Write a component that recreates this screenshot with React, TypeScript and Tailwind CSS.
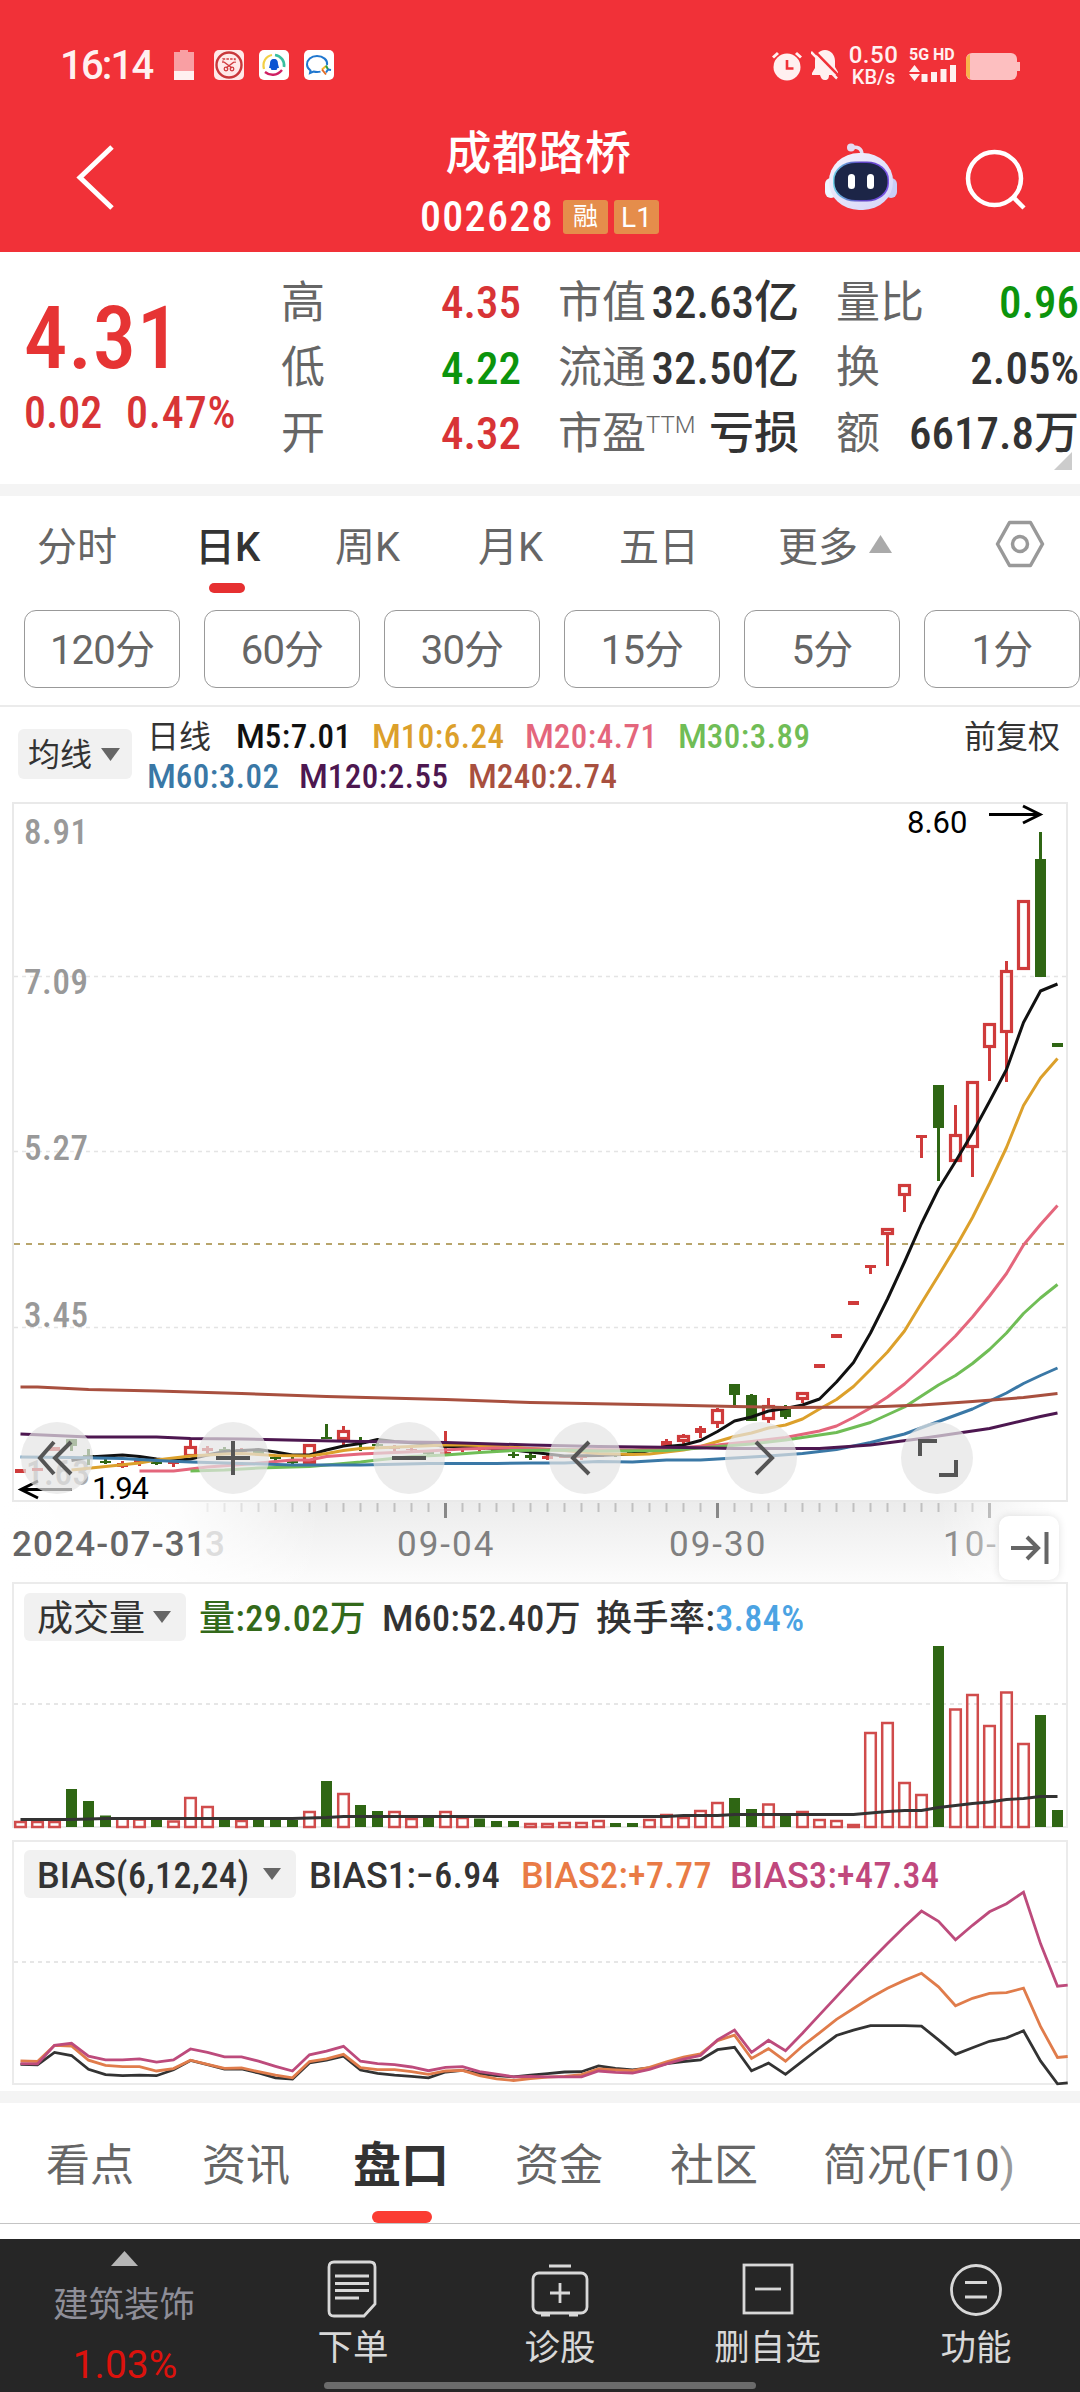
import type { ReactNode } from 'react';

type Kind = 'r' | 'g';

// kind, high, top, bottom, low
type Candle = [Kind, number, number, number, number];

const STEP = 17;
const X0 = 20.5;
const cx = (i: number) => X0 + i * STEP;

const RED = '#cf3b3b';
const GREEN = '#2f6614';

const candles: Candle[] = [
  ['r', 1469, 1469, 1473, 1473],
  ['r', 1468, 1468, 1471, 1471],
  ['r', 1447, 1447, 1451, 1451],
  ['g', 1439, 1439, 1446, 1451],
  ['g', 1449, 1455, 1457, 1465],
  ['g', 1459, 1461, 1463, 1464],
  ['r', 1461, 1463, 1467, 1468],
  ['r', 1459, 1460, 1462, 1466],
  ['g', 1460, 1462, 1464, 1465],
  ['r', 1459, 1462, 1464, 1467],
  ['r', 1440, 1446, 1457, 1457],
  ['r', 1446, 1448, 1451, 1453],
  ['g', 1447, 1449, 1452, 1454],
  ['r', 1448, 1449, 1452, 1454],
  ['g', 1449, 1451, 1454, 1455],
  ['g', 1455, 1457, 1459, 1461],
  ['g', 1457, 1461, 1463, 1464],
  ['r', 1444, 1444, 1464, 1466],
  ['g', 1424, 1437, 1439, 1439],
  ['r', 1426, 1430, 1440, 1445],
  ['g', 1437, 1441, 1444, 1451],
  ['g', 1443, 1444, 1446, 1447],
  ['r', 1445, 1446, 1449, 1451],
  ['r', 1447, 1449, 1450, 1452],
  ['g', 1450, 1452, 1454, 1455],
  ['r', 1431, 1452, 1454, 1454],
  ['r', 1446, 1447, 1450, 1452],
  ['r', 1446, 1448, 1450, 1452],
  ['g', 1447, 1449, 1451, 1453],
  ['g', 1452, 1454, 1456, 1458],
  ['g', 1453, 1455, 1458, 1460],
  ['r', 1454, 1456, 1459, 1460],
  ['r', 1456, 1456, 1458, 1458],
  ['r', 1455, 1456, 1458, 1460],
  ['r', 1455, 1455, 1457, 1457],
  ['g', 1453, 1454, 1456, 1457],
  ['g', 1451, 1452, 1454, 1455],
  ['r', 1446, 1448, 1450, 1452],
  ['r', 1439, 1441, 1447, 1447],
  ['r', 1434, 1435, 1442, 1446],
  ['r', 1426, 1428, 1433, 1438],
  ['r', 1408, 1409, 1424, 1428],
  ['g', 1384, 1384, 1395, 1407],
  ['g', 1394, 1395, 1421, 1421],
  ['r', 1398, 1405, 1420, 1423],
  ['g', 1405, 1408, 1417, 1419],
  ['r', 1392, 1392, 1400, 1403],
  ['r', 1364, 1364, 1368, 1368],
  ['r', 1334, 1334, 1338, 1338],
  ['r', 1301, 1301, 1305, 1305],
  ['r', 1265, 1265, 1268, 1274],
  ['r', 1228, 1228, 1235, 1266],
  ['r', 1184, 1184, 1196, 1212],
  ['r', 1135, 1135, 1138, 1158],
  ['g', 1085, 1085, 1128, 1181],
  ['r', 1105, 1134, 1162, 1162],
  ['r', 1081, 1081, 1148, 1177],
  ['r', 1023, 1023, 1048, 1081],
  ['r', 961, 970, 1033, 1082],
  ['r', 900, 900, 970, 970],
  ['g', 832, 859, 977, 977],
  ['g', 1043, 1043, 1047, 1047],
];

// [candle index, y]
type Series = [number, number][];

const averages: { color: string; pts: Series }[] = [
  {
    color: '#111111',
    pts: [
      [3, 1460.5], [4, 1457], [6, 1455], [7, 1456.5], [8, 1459], [9, 1460.5], [10, 1459], [11, 1455], [12, 1451.5],
      [13, 1450.5], [14, 1449.5], [15, 1452], [16, 1455], [17, 1455], [18, 1450], [19, 1446], [20, 1443.5],
      [21, 1439.5], [22, 1441.5], [24, 1444], [25, 1446.5], [27, 1447.5], [29, 1450], [30, 1452], [31, 1454],
      [32, 1456], [34, 1455.5], [36, 1454], [37, 1450.5], [38, 1446.5], [39, 1445], [40, 1440.5], [41, 1431.5],
      [42, 1421], [43, 1417], [44, 1411], [45, 1408.5], [46, 1405], [47, 1399], [48, 1382], [49, 1362.5], [50, 1333],
      [51, 1299], [52, 1262], [53, 1223.5], [54, 1189], [55, 1161.5], [56, 1133], [57, 1101.5], [58, 1069.5],
      [59, 1022.5], [60, 991], [61, 984],
    ],
  },
  {
    color: '#dca02b',
    pts: [
      [3, 1470], [5, 1466.5], [7, 1463], [8, 1460], [10, 1456], [12, 1454], [13, 1453.5], [14, 1454.5], [15, 1455.5],
      [17, 1456], [18, 1453.5], [19, 1450.5], [20, 1448.5], [23, 1446.5], [25, 1445], [26, 1445], [28, 1446],
      [30, 1448.5], [32, 1450.5], [34, 1453.5], [36, 1454.5], [37, 1454], [38, 1452], [39, 1450], [40, 1446.5],
      [41, 1441.5], [42, 1436.5], [43, 1433], [44, 1428], [45, 1425], [46, 1419], [47, 1409], [48, 1399.5],
      [49, 1386.5], [50, 1369.5], [51, 1352], [52, 1331], [53, 1303], [54, 1275.5], [55, 1247.5], [56, 1217.5],
      [57, 1183.5], [58, 1147.5], [59, 1105.5], [60, 1078], [61, 1058.5],
    ],
  },
  {
    color: '#e4667c',
    pts: [
      [7, 1471], [9, 1471], [10, 1469], [11, 1467], [13, 1464.5], [16, 1460], [17, 1460], [18, 1456.5], [20, 1454],
      [24, 1451], [26, 1449], [28, 1448], [32, 1449.5], [36, 1450], [39, 1447.5], [41, 1445], [43, 1441.5],
      [45, 1437.5], [47, 1431], [48, 1426], [49, 1417.5], [50, 1408], [51, 1397], [52, 1384], [53, 1368.5],
      [54, 1352.5], [55, 1336], [56, 1317], [57, 1296], [58, 1273.5], [59, 1245], [60, 1224.5], [61, 1205.5],
    ],
  },
  {
    color: '#70bd56',
    pts: [
      [10, 1471], [12, 1470], [14, 1468], [17, 1466.5], [18, 1465], [20, 1462], [21, 1460], [23, 1456.5], [25, 1455],
      [27, 1452.5], [29, 1450.5], [32, 1450], [34, 1451], [38, 1450.5], [40, 1448], [43, 1444], [45, 1440],
      [48, 1432.5], [50, 1422.5], [52, 1407], [54, 1385], [55, 1375.5], [56, 1363.5], [57, 1349.5], [58, 1333],
      [59, 1313.5], [60, 1298], [61, 1284.5],
    ],
  },
  {
    color: '#3a78a6',
    pts: [
      [0, 1457], [3, 1457.5], [6, 1458.5], [8, 1460.5], [10, 1462], [13, 1463.5], [16, 1465], [20, 1465],
      [24, 1463.5], [28, 1463.5], [30, 1463], [32, 1463], [34, 1461.5], [36, 1462], [38, 1460], [40, 1460],
      [42, 1458], [44, 1456], [46, 1453.5], [48, 1449.5], [50, 1442.5], [52, 1434], [54, 1421.5], [56, 1409],
      [58, 1393], [59, 1383.5], [60, 1375.5], [61, 1368],
    ],
  },
  {
    color: '#4d1750',
    pts: [
      [0, 1434], [4, 1437], [8, 1437], [10, 1438.5], [13, 1439], [17, 1440.5], [20, 1441.5], [25, 1442.5],
      [30, 1445], [34, 1446.5], [39, 1447.5], [42, 1448.5], [47, 1448.5], [50, 1445], [53, 1438.5], [57, 1428.5],
      [60, 1416.5], [61, 1413],
    ],
  },
  {
    color: '#a8503f',
    pts: [
      [0, 1387], [1, 1387], [4, 1389.5], [8, 1391], [13, 1393.5], [18, 1396.5], [25, 1399.5], [30, 1402.5],
      [38, 1405], [42, 1406.5], [45, 1407.5], [50, 1407], [53, 1405], [56, 1401.5], [59, 1397.5], [61, 1393.5],
    ],
  },
];

const volumes: [Kind, number][] = [
  ['r', 6], ['r', 6], ['r', 6], ['g', 38], ['g', 26], ['g', 11.5], ['r', 9.5], ['r', 8.5], ['g', 7], ['r', 6.5],
  ['r', 30], ['r', 21], ['g', 7.5], ['r', 7], ['g', 7], ['g', 7.5], ['g', 7], ['r', 16], ['g', 46], ['r', 34],
  ['g', 22], ['g', 16], ['r', 16], ['r', 9], ['g', 10], ['r', 16], ['r', 10], ['g', 8.5], ['g', 6], ['g', 6],
  ['r', 4], ['r', 4], ['r', 5], ['r', 5], ['r', 7], ['g', 4], ['g', 4], ['r', 8], ['r', 13], ['r', 10],
  ['r', 17], ['r', 25], ['g', 29], ['g', 18], ['r', 23.5], ['g', 11], ['r', 16], ['r', 8], ['r', 7], ['r', 3],
  ['r', 95], ['r', 105], ['r', 45], ['r', 33], ['g', 181], ['r', 118.5], ['r', 133], ['r', 102], ['r', 135.5],
  ['r', 84], ['g', 112], ['g', 17],
];

const volumeAverage: Series = [
  [0, 7.5], [3, 7.5], [5, 8.5], [16, 8.5], [18, 9.5], [19, 10.5], [38, 10.5], [39, 11.5], [41, 11.5], [42, 12.5],
  [49, 12.5], [51, 15.5], [52, 16.5], [53, 16.5], [54, 19.5], [55, 21.5], [56, 23.5], [57, 25], [58, 27.5],
  [59, 28.5], [60, 30.5], [61, 30.5],
];

const bias: { color: string; ys: number[] }[] = [
  {
    color: '#333333',
    ys: [
      1462, 1464, 1427, 1436, 1477, 1493, 1496, 1494, 1496, 1478, 1451, 1463, 1476, 1476, 1488, 1502, 1506, 1458,
      1450, 1438, 1479, 1489, 1494, 1498, 1502, 1485, 1480, 1490, 1496, 1499, 1494, 1490, 1485, 1484, 1467, 1474,
      1479, 1473, 1460, 1454, 1449, 1419, 1412, 1481, 1459, 1492, 1453, 1414, 1377, 1361, 1348, 1348, 1348, 1349,
      1390, 1433, 1413, 1394, 1384, 1363, 1452, 1520,
    ],
  },
  {
    color: '#e07c4b',
    ys: [
      1452, 1454, 1406, 1408, 1450, 1465, 1469, 1469, 1482, 1475, 1450, 1462, 1474, 1473, 1484, 1494, 1502, 1454,
      1446, 1433, 1472, 1478, 1478, 1484, 1492, 1482, 1480, 1496, 1505, 1510, 1504, 1500, 1498, 1493, 1476, 1479,
      1481, 1471, 1455, 1441, 1431, 1392, 1376, 1445, 1416, 1453, 1408, 1369, 1329, 1297, 1265, 1237, 1214, 1193,
      1233, 1289, 1267, 1252, 1250, 1237, 1350, 1442,
    ],
  },
  {
    color: '#bd4b7c',
    ys: [
      1460, 1461, 1406, 1400, 1438, 1449, 1449, 1446, 1456, 1449, 1417, 1427, 1440, 1440, 1453, 1468, 1482, 1434,
      1423, 1409, 1453, 1460, 1463, 1470, 1481, 1471, 1469, 1484, 1491, 1499, 1498, 1499, 1499, 1499, 1482, 1486,
      1488, 1477, 1461, 1447, 1436, 1390, 1361, 1427, 1391, 1422, 1370, 1316, 1262, 1208, 1156, 1105, 1055, 1009,
      1039, 1094, 1051, 1011, 987, 953, 1105, 1231,
    ],
  },
];

const line = (pts: Series, y: (v: number) => number = (v) => v) =>
  pts.map(([i, v]) => `${cx(i)},${y(v).toFixed(1)}`).join(' ');

// letters keep their full width, figures are set condensed
function Num({ children }: { children: string }) {
  return (
    <>
      {children
        .split(/([A-Z]+)/)
        .filter(Boolean)
        .map((part, i) =>
          /[A-Z]/.test(part) ? (
            part
          ) : (
            <span key={i} className="tracking-[0.5px] [font-stretch:75%]">
              {part}
            </span>
          ),
        )}
    </>
  );
}

function CandleMark({ i, candle }: { i: number; candle: Candle }) {
  const [kind, high, top, bottom, low] = candle;
  const color = kind === 'r' ? RED : GREEN;
  const x = cx(i);
  const hollow = kind === 'r' && bottom - top > 6;
  return (
    <g stroke={color} fill={color}>
      {high < top && <line x1={x} x2={x} y1={high} y2={top} strokeWidth="3" />}
      {low > bottom && <line x1={x} x2={x} y1={bottom} y2={low} strokeWidth="3" />}
      {hollow ? (
        <rect x={x - 5} y={top + 1.5} width="10" height={bottom - top - 3} fill="none" strokeWidth="3.2" />
      ) : (
        <rect x={x - 5.5} y={top} width="11" height={bottom - top} stroke="none" />
      )}
    </g>
  );
}

function Caret({ up = false, className = '' }: { up?: boolean; className?: string }) {
  return (
    <svg viewBox="0 0 20 13" preserveAspectRatio="none" className={className}>
      <path d={up ? 'M10 0 20 13H0Z' : 'M0 0H20L10 13Z'} fill="currentColor" />
    </svg>
  );
}

function StatusBar() {
  return (
    <div className="flex h-[104px] items-start pt-[47px] text-[#fff0f0]">
      <div className="mt-[1px] ml-[60px] w-[114px] text-[40px] leading-[36px] font-medium tracking-[-1.8px]">16:14</div>
      <svg viewBox="0 0 20 30" className="mt-[3px] h-[30px] w-5">
        <path d="M6 0h8v2h6v28H0V2h6z" fill="#f99fa3" />
        <path d="M0 21h20v9H0z" fill="#fff0f0" />
      </svg>
      <svg viewBox="0 0 30 30" className="mt-[3px] ml-5 h-[30px] w-[30px]">
        <rect width="30" height="30" rx="5" fill="#ffe9e9" />
        <circle cx="15" cy="15" r="12.5" fill="none" stroke="#c9383c" strokeWidth="2.4" />
        <path d="M9 13V9h12v4" fill="none" stroke="#d13b40" strokeWidth="1.4" strokeDasharray="2.5 1.2" />
        <path d="M10 12l8 6M20 12l-8 6" stroke="#d13b40" strokeWidth="1.5" />
        <circle cx="12" cy="19" r="1.8" fill="none" stroke="#d13b40" strokeWidth="1.3" />
        <circle cx="18" cy="19" r="1.8" fill="none" stroke="#d13b40" strokeWidth="1.3" />
      </svg>
      <svg viewBox="0 0 30 30" className="mt-[3px] ml-[15px] h-[30px] w-[30px]">
        <rect width="30" height="30" rx="5" fill="#fff" />
        <path d="M5 19C3 12 7 6 13 5" fill="none" stroke="#f3cf45" strokeWidth="2.2" />
        <path d="M16 5c6 1 10 6 9 12" fill="none" stroke="#39bfa0" strokeWidth="2.6" />
        <path d="M6 22c5 4 12 4 17-2" fill="none" stroke="#cf1f63" strokeWidth="2.4" />
        <path d="M15 9c-3 0-4 2-4 5l-1 4h1.5l1 2h5l1-2H20l-1-4c0-3-1-5-4-5z" fill="#0b55d2" />
      </svg>
      <svg viewBox="0 0 30 30" className="mt-[3px] ml-[15px] h-[30px] w-[30px]">
        <rect width="30" height="30" rx="5" fill="#fff" />
        <path
          d="M23 15c1-5-4-9-10-9S3 10 3 14.5c0 2.5 1.5 4.500 3.500 6L6 23l3.500-1.500c2 .6 5 .6 7 .1"
          fill="none"
          stroke="#2077cf"
          strokeWidth="2"
        />
        <path d="M18 19.500l4-3.500" stroke="#f6b92d" strokeWidth="2" />
        <path d="M22 15.500l2 4" stroke="#2aa04a" strokeWidth="2" />
        <path d="M24 19.500l3 .5M24 19.500l-2 3" stroke="#2077cf" strokeWidth="2" />
        <path d="M18 19.500l4 5" stroke="#e36a22" strokeWidth="2" />
      </svg>

      <div className="ml-auto flex pr-[60px]">
        <svg viewBox="0 0 30 30" className="mt-[4px] h-[30px] w-[30px]">
          <circle cx="15" cy="16" r="13.5" fill="currentColor" />
          <path d="M1 6.500 6 2M29 6.500 24 2" stroke="currentColor" strokeWidth="3" />
          <path d="M15 9v8.500h6.500" fill="none" stroke="#f13138" strokeWidth="2.6" />
        </svg>
        <svg viewBox="0 0 28 31" className="mt-[3px] ml-[9px] h-[31px] w-7">
          <path d="M14 0c6 0 10 5 10 11v6l3 5v3H18c0 3-1 5-4 5s-4-2-5-5H1v-2l3-5v-7C4 5 8 0 14 0z" fill="currentColor" />
          <path d="M2.500 0 28 26" stroke="#f13138" strokeWidth="2.5" />
          <path d="M0 2 26 28.500" stroke="currentColor" strokeWidth="2.5" />
        </svg>
        <div className="ml-[9px] w-[51px] text-center font-medium">
          <div className="-mt-[4px] text-[24px] leading-[24px] tracking-[0.5px]">0.50</div>
          <div className="text-[20px] leading-[20px]">KB/s</div>
        </div>
        <div className="ml-2.5 w-[48px]">
          <div className="text-[16px] leading-[16px] font-bold whitespace-nowrap">5G HD</div>
          <svg viewBox="0 0 48 18" className="mt-[1px] h-[18px] w-12">
            <path d="M5.500 1 11 8H0zM5.500 17 0 10h11z" fill="currentColor" />
            <path d="M15.500 10v8M25 8v10M34.500 5v13M44 1v17" stroke="currentColor" strokeWidth="6" />
          </svg>
        </div>
        <svg viewBox="0 0 54 28" className="mt-[6px] ml-[9px] h-7 w-[54px]">
          <rect width="51" height="27" rx="6" fill="#fdbfc0" />
          <path d="M51 9h3v9h-3z" fill="#fdbfc0" />
          <path d="M4 1Q0 3 0 7v13q0 4 4 6z" fill="#f7b34b" />
        </svg>
      </div>
    </div>
  );
}

function Robot() {
  return (
    <svg viewBox="0 0 72 68" className="h-[68px] w-[72px]">
      <defs>
        <linearGradient id="shell" x1="0" y1="0" x2="1" y2="1">
          <stop offset="0" stopColor="#f7f4fd" />
          <stop offset="1" stopColor="#d3d3f8" />
        </linearGradient>
        <linearGradient id="rim" x1="0" y1="0.5" x2="1" y2="0.5">
          <stop offset="0" stopColor="#6fd3e8" />
          <stop offset="0.5" stopColor="#5a3fc0" />
          <stop offset="1" stopColor="#7a55e6" />
        </linearGradient>
      </defs>
      <rect x="0" y="35" width="12" height="20" rx="6" fill="#eef6ff" />
      <rect x="60" y="35" width="12" height="20" rx="6" fill="#c9cdf6" />
      <path d="M26 5c6-2 11 0 11 7" fill="none" stroke="#e7dff2" strokeWidth="3.5" />
      <circle cx="26" cy="4.5" r="4" fill="#e3dcf2" />
      <rect x="4" y="10" width="64" height="57" rx="30" ry="28" fill="url(#shell)" />
      <rect x="8" y="18.5" width="56" height="40" rx="22" ry="18" fill="url(#rim)" />
      <rect x="9.5" y="20" width="53" height="37" rx="21" ry="17" fill="#1c2547" />
      <rect x="23" y="31" width="7" height="15" rx="3.5" fill="#fff" />
      <rect x="42" y="31" width="7" height="15" rx="3.5" fill="#fff" />
    </svg>
  );
}

function TitleBar() {
  return (
    <div className="flex h-[148px] text-white">
      <div className="w-[252px] pt-10 pl-[74px]">
        <svg viewBox="0 0 42 68" className="h-[68px] w-[42px]">
          <path d="M38 3 6 33.500 38 64" fill="none" stroke="currentColor" strokeWidth="5" />
        </svg>
      </div>
      <div className="flex flex-1 flex-col items-center pt-[21px]">
        <div className="text-[46px] leading-[56px] font-medium tracking-[0.5px]">成都路桥</div>
        <div className="mt-[18px] ml-[2px] flex h-[36px] items-center">
          <div className="w-[143px] text-[42px] leading-9 font-medium tracking-[1.3px] [font-stretch:75%]">002628</div>
          <div className="h-[34px] w-[45px] rounded-[3px] bg-[#e58d4b] text-center text-[25px] leading-[34px]">融</div>
          <div className="ml-1.5 h-[34px] w-[45px] rounded-[3px] bg-[#e58d4b] text-center text-[28px] leading-[36px]">L1</div>
        </div>
      </div>
      <div className="flex w-[255px] pt-[39px]">
        <Robot />
        <svg viewBox="0 0 62 64" className="mt-[6px] ml-[68px] h-16 w-[62px]">
          <circle cx="29.5" cy="29.5" r="26.5" fill="none" stroke="currentColor" strokeWidth="4.5" />
          <path d="M48 48 59 59" stroke="currentColor" strokeWidth="4.5" />
        </svg>
      </div>
    </div>
  );
}

const stats: { label: ReactNode; value: string; tone: string }[][] = [
  [
    { label: '高', value: '4.35', tone: 'text-[#d83436]' },
    { label: '低', value: '4.22', tone: 'text-[#0c940c]' },
    { label: '开', value: '4.32', tone: 'text-[#d83436]' },
  ],
  [
    { label: '市值', value: '32.63亿', tone: 'text-[#333]' },
    { label: '流通', value: '32.50亿', tone: 'text-[#333]' },
    {
      label: (
        <>
          市盈<sup className="relative -top-[16px] align-baseline text-[24px] leading-none font-light">TTM</sup>
        </>
      ),
      value: '亏损',
      tone: 'text-[#333]',
    },
  ],
  [
    { label: '量比', value: '0.96', tone: 'text-[#0c940c]' },
    { label: '换', value: '2.05%', tone: 'text-[#333]' },
    { label: '额', value: '6617.8万', tone: 'text-[#333]' },
  ],
];

const statWidths = ['w-[240px]', 'w-[241px]', 'w-[243px]'];

function Quote() {
  return (
    <div className="relative flex h-[232px] bg-white">
      <div className="w-[281px] shrink-0 pl-6 text-[#e63434]">
        <div className="mt-[38px] text-[87px] leading-[96px] font-medium tracking-[0.5px] [font-stretch:75%]">4.31</div>
        <div className="mt-[4px] flex text-[44px] leading-[46px] font-medium text-[#d83436] [font-stretch:75%]">
          <span className="w-[102px]">0.02</span>
          <span className="tracking-[0.8px]">0.47%</span>
        </div>
      </div>
      {stats.map((col, c) => (
        <div key={c} className={`mr-[37px] shrink-0 pt-[18px] ${statWidths[c]}`}>
          {col.map((row) => (
            <div key={row.value} className="flex h-[65.5px] items-center justify-between whitespace-nowrap">
              <span className="text-[44px] text-[#666]">{row.label}</span>
              <span className={`text-[45px] font-medium [font-stretch:75%] ${row.tone}`}>{row.value}</span>
            </div>
          ))}
        </div>
      ))}
      <svg viewBox="0 0 18 18" className="absolute right-2 bottom-[14px] h-[18px] w-[18px]">
        <path d="M18 0v18H0z" fill="#ccc" />
      </svg>
    </div>
  );
}

function PeriodTabs() {
  const tab = 'text-[40px] leading-[50px]';
  return (
    <div className="flex h-[114px] pt-[27px] pl-[37px] whitespace-nowrap text-[#666]">
      <div className={`w-[158px] ${tab}`}>分时</div>
      <div className={`flex w-[140px] flex-col text-[#333] ${tab}`}>
        <span className="font-medium">日K</span>
        <span className="mt-[10px] ml-[14px] h-[10px] w-9 rounded-full bg-[#e63031]" />
      </div>
      <div className={`w-[143px] ${tab}`}>周K</div>
      <div className={`w-[141px] ${tab}`}>月K</div>
      <div className={`w-[159px] ${tab}`}>五日</div>
      <div className={`flex ${tab}`}>
        更多
        <Caret up className="mt-[12px] ml-[11px] h-[18px] w-[23px] text-[#aaa]" />
      </div>
      <svg viewBox="0 0 50 48" className="-mt-[3px] ml-[103px] h-12 w-[50px]">
        <path d="M14.500 2.500h21L47.500 24 35.500 45.500h-21L2.500 24z" fill="none" stroke="#999" strokeWidth="3.5" strokeLinejoin="round" />
        <circle cx="25" cy="24" r="7.5" fill="none" stroke="#999" strokeWidth="3.5" />
      </svg>
    </div>
  );
}

function MinuteButtons() {
  return (
    <div className="flex h-[97px] gap-6 border-b-2 border-[#ebebeb] pl-6">
      {['120', '60', '30', '15', '5', '1'].map((m) => (
        <div
          key={m}
          className="h-[78px] w-[156px] shrink-0 rounded-[12px] border border-[#999] text-center text-[40px] leading-[79px] tracking-[-0.8px] text-[#666]"
        >
          {m}分
        </div>
      ))}
    </div>
  );
}

function AverageLegend() {
  return (
    <div className="flex h-[95px] text-[33px] leading-[40px] font-medium whitespace-nowrap text-[#333]">
      <div className="mt-[22px] ml-[18px] flex h-[50px] w-[114px] items-center rounded-[6px] bg-[#f1f1f1] pl-[10px] text-[32px] font-normal">
        <span className="pt-0.5">均线</span>
        <Caret className="ml-[9px] h-[13px] w-[19px] text-[#666]" />
      </div>
      <div className="ml-[15px] pt-[10px]">
        <div className="flex">
          <span className="w-[89px] text-[32px] font-normal">日线</span>
          <span className="w-[136px] text-[#111]"><Num>M5:7.01</Num></span>
          <span className="w-[153px] text-[#dca02b]"><Num>M10:6.24</Num></span>
          <span className="w-[153px] text-[#e4667c]"><Num>M20:4.71</Num></span>
          <span className="w-[200px] text-[#70bd56]"><Num>M30:3.89</Num></span>
        </div>
        <div className="flex">
          <span className="w-[152px] text-[#3a78a6]"><Num>M60:3.02</Num></span>
          <span className="w-[169px] text-[#4d1750]"><Num>M120:2.55</Num></span>
          <span className="text-[#a8503f]"><Num>M240:2.74</Num></span>
        </div>
      </div>
      <div className="mr-[20px] ml-auto pt-[10px] text-[32px] font-normal">前复权</div>
    </div>
  );
}

const controls = [
  'M33 20 19 36l14 16M50 20 34 36l16 16',
  'M36 19v34M19 36h34',
  'M19 36h34',
  'M40 20 24 36l16 16',
  'M31 20l16 16-16 16',
  'M19 34V19h17M55 38v15H38',
];

function PriceChart() {
  return (
    <div className="relative h-[700px]">
      <svg viewBox="0 802 1080 700" className="h-[700px] w-[1080px] overflow-visible">
        <rect x="13" y="803" width="1054" height="698" fill="none" stroke="#e9e9e9" strokeWidth="2" />
        {[976.5, 1151.5, 1327.5].map((y) => (
          <line key={y} x1="14" x2="1066" y1={y} y2={y} stroke="#e4e4e4" strokeWidth="1.5" strokeDasharray="4 4" />
        ))}
        <line x1="14" x2="1066" y1="1244" y2="1244" stroke="#b8a56c" strokeWidth="2" strokeDasharray="6 6" />
        <g className="text-[35px] font-medium tracking-[0.6px] [font-stretch:75%]" fill="#999">
          <text x="24" y="844">8.91</text>
          <text x="24" y="994">7.09</text>
          <text x="24" y="1160">5.27</text>
          <text x="24" y="1327">3.45</text>
          <text x="26" y="1485" fill="#aaa">1.63</text>
        </g>
        {candles.map((c, i) => (
          <CandleMark key={i} i={i} candle={c} />
        ))}
        {averages.map((a) => (
          <polyline key={a.color} points={line(a.pts)} fill="none" stroke={a.color} strokeWidth="3" strokeLinejoin="round" />
        ))}
        <g className="text-[31px]" fill="#000">
          <text x="907" y="833">8.60</text>
          <text x="92" y="1499" textLength="57">1.94</text>
        </g>
        <g fill="none" stroke="#000" strokeWidth="3">
          <path d="M989 814.500h50M1023 806l17 8.500-17 8.500" />
          <path d="M72 1489.500H21M38 1481l-17 8.500 17 8.500" />
        </g>
      </svg>
      <div className="absolute top-[620px] left-[21px] flex gap-[104px]">
        {controls.map((d) => (
          <svg key={d} viewBox="0 0 72 72" className="h-[72px] w-[72px]">
            <circle cx="36" cy="36" r="36" fill="#e4e4e4" opacity="0.7" />
            <path d={d} fill="none" stroke="#555" strokeWidth="4" />
          </svg>
        ))}
      </div>
    </div>
  );
}

function DateAxis() {
  return (
    <div className="relative h-[80px] bg-gradient-to-b from-[#ececec] to-[#fcfcfc]">
      <svg viewBox="0 1502 1080 80" className="h-20 w-[1080px]">
        <defs>
          <linearGradient id="fadeLeft">
            <stop offset="0" stopColor="#fff" />
            <stop offset="0.55" stopColor="#fff" stopOpacity="0.9" />
            <stop offset="1" stopColor="#fff" stopOpacity="0" />
          </linearGradient>
          <linearGradient id="fadeRight">
            <stop offset="0" stopColor="#fff" stopOpacity="0" />
            <stop offset="0.8" stopColor="#fff" />
            <stop offset="1" stopColor="#fff" />
          </linearGradient>
        </defs>
        {Array.from({ length: 47 }, (_, k) => k + 11).map((i) => {
          const major = i === 25 || i === 41 || i === 57;
          return (
            <line
              key={i}
              x1={cx(i)}
              x2={cx(i)}
              y1="1503"
              y2={major ? 1518 : 1512}
              stroke={major ? '#888' : '#c0c0c0'}
              strokeWidth={major ? 3 : 2}
            />
          );
        })}
        <g className="text-[35px] tracking-[2px]" fill="#808080">
          <text x="397" y="1556">09-04</text>
          <text x="669" y="1556">09-30</text>
          <text x="943" y="1556">10-18</text>
        </g>
        <rect x="0" y="1502" width="320" height="80" fill="url(#fadeLeft)" />
        <rect x="940" y="1502" width="140" height="80" fill="url(#fadeRight)" />
        <g className="text-[35px] font-medium tracking-[1.2px]">
          <text x="12" y="1556" fill="#666">2024-07-31</text>
          <text x="205" y="1556" fill="#ddd">3</text>
        </g>
      </svg>
      <div className="absolute top-[14px] left-[999px] h-16 w-[60px] rounded-[10px] bg-white shadow-[0_0_8px_rgba(0,0,0,0.12)]">
        <svg viewBox="0 0 60 64" className="h-16 w-[60px]">
          <path d="M12 32h27M28 21l11 11-11 11M47.500 16v32" fill="none" stroke="#666" strokeWidth="4" />
        </svg>
      </div>
    </div>
  );
}

function VolumeChart() {
  const base = 1827;
  return (
    <div className="relative h-[258px]">
      <svg viewBox="0 1582 1080 258" className="absolute h-[258px] w-[1080px]">
        <path d="M13 1827V1583H1067V1827Z" fill="none" stroke="#ebebeb" strokeWidth="2" />
        <line x1="14" x2="1066" y1="1704" y2="1704" stroke="#e6e6e6" strokeWidth="2" strokeDasharray="4 4" />
        {volumes.map(([kind, h], i) =>
          kind === 'g' ? (
            <rect key={i} x={cx(i) - 5.5} y={base - h} width="11" height={h} fill={GREEN} />
          ) : (
            <rect
              key={i}
              x={cx(i) - 5.3}
              y={base - h + 1}
              width="10.6"
              height={Math.max(h - 1, 2)}
              fill="none"
              stroke="#d04c4c"
              strokeWidth="2.5"
            />
          ),
        )}
        <polyline points={line(volumeAverage, (v) => base - v)} fill="none" stroke="#333" strokeWidth="2.8" />
      </svg>
      <div className="relative flex items-center pt-[11px] pl-6 text-[36px] leading-[48px] font-medium whitespace-nowrap text-[#333]">
        <div className="flex h-12 w-[162px] items-center rounded-[6px] bg-[#f1f1f1] pl-[13px] font-normal">
          <span className="pt-1">成交量</span>
          <Caret className="ml-2 h-[12px] w-[18px] text-[#666]" />
        </div>
        <span className="-mb-1 ml-[13px] w-[183px] text-[#33691a]"><Num>量:29.02万</Num></span>
        <span className="-mb-1 w-[214px]"><Num>M60:52.40万</Num></span>
        <span className="-mb-1"><Num>换手率:</Num></span>
        <span className="-mb-1 text-[#4ba3e3]"><Num>3.84%</Num></span>
      </div>
    </div>
  );
}

function BiasChart() {
  return (
    <div className="relative h-[251px]">
      <svg viewBox="0 1840 1080 251" className="absolute h-[251px] w-[1080px]">
        <rect x="13" y="1841" width="1054" height="243" fill="none" stroke="#ebebeb" strokeWidth="2" />
        <line x1="14" x2="1066" y1="1962" y2="1962" stroke="#e6e6e6" strokeWidth="2" strokeDasharray="4 4" />
        {bias.map((b) => {
          const pts = b.ys.map((v, i): [number, number] => [i, 1570 + v / 2.958]);
          pts.push([61.6, pts[61][1] - 1]);
          return <polyline key={b.color} points={line(pts)} fill="none" stroke={b.color} strokeWidth="2.8" />;
        })}
      </svg>
      <div className="relative flex items-center pt-[10px] pl-6 text-[36px] leading-[48px] font-medium whitespace-nowrap text-[#333]">
        <div className="flex h-12 w-[272px] items-center rounded-[6px] bg-[#f1f1f1] pl-[13px]">
          <span className="w-[226px] pt-1"><Num>BIAS(6,12,24)</Num></span>
          <Caret className="h-[12px] w-[18px] text-[#666]" />
        </div>
        <span className="-mb-1 ml-[13px] w-[212px]"><Num>BIAS1:−6.94</Num></span>
        <span className="-mb-1 w-[209px] text-[#e97b46]"><Num>BIAS2:+7.77</Num></span>
        <span className="-mb-1 text-[#c0487d]"><Num>BIAS3:+47.34</Num></span>
      </div>
    </div>
  );
}

function InfoTabs() {
  return (
    <div className="h-[136px] bg-white">
      <div className="flex h-[121px] border-b border-[#c4c4c4] pt-[36px] pl-[46px] text-[44px] leading-[54px] whitespace-nowrap text-[#666]">
        <span className="w-[156px]">看点</span>
        <span className="w-[151px]">资讯</span>
        <div className="flex w-[162px] flex-col text-[#333]">
          <span className="text-[48px] font-bold">盘口</span>
          <span className="mt-[18px] ml-[19px] h-3 w-[60px] rounded-full bg-[#fb3c32]" />
        </div>
        <span className="w-[155px]">资金</span>
        <span className="w-[153px]">社区</span>
        <span>
          简况(F10<span className="text-[#999]">)</span>
        </span>
      </div>
    </div>
  );
}

const actions: { label: string; width: string; icon: ReactNode }[] = [
  {
    label: '下单',
    width: 'w-[208px]',
    icon: (
      <>
        <path d="M10 3h36q5 0 5 5v37L40 57H10q-5 0-5-5V8q0-5 5-5z" />
        <path d="M11 17h34M11 24.500h34M11 31.500h34M11 39h24" />
      </>
    ),
  },
  {
    label: '诊股',
    width: 'w-[206px]',
    icon: (
      <>
        <rect x="2" y="14" width="54" height="40" rx="6" />
        <path d="M18 7h22M29 24v20M19 34h20M10 56h9M38 56h9" />
      </>
    ),
  },
  {
    label: '删自选',
    width: 'w-[209px]',
    icon: (
      <>
        <rect x="5" y="6" width="48" height="48" />
        <path d="M16 30h26" />
      </>
    ),
  },
  {
    label: '功能',
    width: 'w-[208px]',
    icon: (
      <>
        <circle cx="29" cy="31" r="24.5" />
        <path d="M18 23.500h22M18 38h22" />
      </>
    ),
  },
];

function BottomBar() {
  return (
    <div className="relative flex h-[153px] bg-[#262626]">
      <div className="flex w-[248px] flex-col items-center pt-[12px]">
        <Caret up className="h-[15px] w-[27px] text-[#b5b5b5]" />
        <div className="mt-[16px] text-[35.5px] leading-[46px] text-[#8e8e98]">建筑装饰</div>
        <div className="mt-[14px] ml-[2px] text-[39px] leading-[46px] text-[#dc120d]">1.03%</div>
      </div>
      {actions.map((a) => (
        <div key={a.label} className={`flex flex-col items-center pt-5 pl-0.5 ${a.width}`}>
          <svg viewBox="0 0 58 60" className="h-[60px] w-[58px]" fill="none" stroke="#d8d8d8" strokeWidth="2.8">
            {a.icon}
          </svg>
          <div className="mt-[6px] text-[35.5px] leading-[46px] text-[#d8d8d8]">{a.label}</div>
        </div>
      ))}
      <div className="absolute bottom-[3px] left-[324px] h-[7px] w-[432px] rounded-full bg-[#6b6b6b]" />
    </div>
  );
}

export default function App() {
  return (
    <div className="w-[1080px] overflow-hidden bg-white font-['Roboto','Noto_Sans_CJK_SC',sans-serif]">
      <header className="h-[252px] bg-[#f13138]">
        <StatusBar />
        <TitleBar />
      </header>
      <Quote />
      <div className="h-3 bg-[#f4f4f4]" />
      <PeriodTabs />
      <MinuteButtons />
      <AverageLegend />
      <PriceChart />
      <DateAxis />
      <VolumeChart />
      <BiasChart />
      <div className="h-3 bg-[#f4f4f4]" />
      <InfoTabs />
      <BottomBar />
    </div>
  );
}
